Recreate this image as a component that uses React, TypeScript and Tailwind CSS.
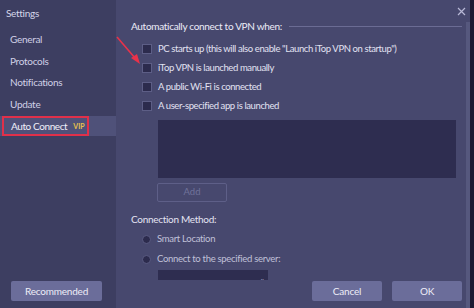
import React from "react";

function Check({ label }: { label: string }) {
  return (
    <div className="flex items-center gap-[6px] h-[19px]">
      <div className="w-[10px] h-[10px] bg-[#2c2b4d] border border-[#5d5e86]" />
      <span className="text-[9.5px] tracking-[-0.4px] text-[#e2e2f2] leading-none whitespace-nowrap">{label}</span>
    </div>
  );
}

function Radio({ label }: { label: string }) {
  return (
    <div className="flex items-center gap-[6px] h-[20px]">
      <div className="w-[9px] h-[9px] rounded-full bg-[#2c2b4d] border border-[#5a5b82]" />
      <span className="text-[9.5px] tracking-[-0.3px] text-[#c0c0d8] leading-none whitespace-nowrap">{label}</span>
    </div>
  );
}

export default function App() {
  return (
    <div
      className="relative w-[474px] h-[308px] flex overflow-hidden bg-[#47486e]"
      style={{ fontFamily: 'Lato, "Open Sans", sans-serif' }}
    >
      {/* Sidebar */}
      <div className="w-[116px] h-full bg-[#3d3e61] flex flex-col">
        <div className="pl-[6px] pt-[6px] h-[24px] text-[10px] tracking-[-0.3px] text-[#d6d6ea]">Settings</div>
        <div className="flex flex-col mt-[5px]">
          {["General", "Protocols", "Notifications", "Update"].map((t) => (
            <div key={t} className="h-[21.5px] pl-[10px] flex items-center text-[10px] tracking-[-0.3px] text-[#d0d0e6]">
              {t}
            </div>
          ))}
          <div className="h-[20px] mt-[1px] bg-[#4f5179] flex items-center">
            <div className="ml-[2px] w-[87px] h-[20px] border-2 border-[#e0304a] flex items-center pl-[7px] gap-[6px] whitespace-nowrap">
              <span className="text-[10px] tracking-[-0.4px] text-[#f0f0fa]">Auto Connect</span>
              <span className="text-[7px] font-bold text-[#e8c24a]">VIP</span>
            </div>
          </div>
        </div>
        <div className="flex-1" />
        <div className="pl-[11px] pb-[7px]">
          <div className="w-[91px] h-[20px] bg-[#6b6d9a] rounded-[2px] flex items-center justify-center text-[10px] tracking-[-0.2px] text-[#eeeef8]">
            Recommended
          </div>
        </div>
      </div>

      {/* Main */}
      <div className="flex-1 h-full flex">
        <div className="flex-1 flex flex-col pl-[15px] pt-[18px] pr-[4px]">
          <div className="flex items-center gap-[7px] h-[16px]">
            <span className="text-[10px] tracking-[-0.3px] text-[#ececf8] whitespace-nowrap">Automatically connect to VPN when:</span>
            <div className="flex-1 h-px bg-[#6b6c94]" />
          </div>
          <div className="flex flex-col pl-[11px] mt-[5px]">
            <Check label={'PC starts up (this will also enable "Launch iTop VPN on startup")'} />
            <Check label="iTop VPN is launched manually" />
            <Check label="A public Wi-Fi is connected" />
            <Check label="A user-specified app is launched" />
          </div>
          <div className="ml-[27px] mt-[5px] w-[298px] h-[58px] bg-[#2e2d50]" />
          <div className="ml-[26px] mt-[5px] w-[70px] h-[19px] border border-[#5e5f88] rounded-[2px] flex items-center justify-center text-[9.5px] text-[#70729a]">
            Add
          </div>
          <div className="mt-[10px] text-[10px] tracking-[-0.3px] text-[#e4e4f2] h-[16px]">Connection Method:</div>
          <div className="flex flex-col pl-[11px] mt-[1px]">
            <Radio label="Smart Location" />
            <Radio label="Connect to the specified server:" />
          </div>
          <div className="ml-[27px] mt-[1px] w-[110px] h-[10px] bg-[#2e2d50] flex items-end justify-end pr-[4px]">
            <span className="text-[7px] leading-[6px] text-[#a0a0c0]">..</span>
          </div>
          <div className="flex-1" />
          <div className="flex justify-end gap-[10px] pb-[7px]">
            <div className="w-[70px] h-[20px] bg-[#6b6d9a] rounded-[2px] flex items-center justify-center text-[10px] tracking-[-0.2px] text-[#eeeef8]">
              Cancel
            </div>
            <div className="w-[70px] h-[20px] bg-[#6b6d9a] rounded-[2px] flex items-center justify-center text-[10px] tracking-[-0.2px] text-[#eeeef8]">
              OK
            </div>
          </div>
        </div>
        {/* scrollbar */}
        <div className="w-[8px] h-full flex">
          <div className="w-[4px] h-full pt-[22px]">
            <div className="w-full h-full bg-[#56587e]" />
          </div>
          <div className="w-[4px] h-full bg-[#1c1b33]" />
        </div>
      </div>

      {/* Close X */}
      <svg className="absolute left-[457px] top-[7px]" width="9" height="9" viewBox="0 0 9 9">
        <path d="M1 1 L8 8 M8 1 L1 8" stroke="#b8b8d6" strokeWidth="1.2" />
      </svg>

      {/* red annotation arrow */}
      <svg className="absolute left-0 top-0 pointer-events-none" width="474" height="308">
        <line x1="117" y1="37" x2="135" y2="58" stroke="#e8324a" strokeWidth="1.6" />
        <polygon points="140,64 131,58 137,54" fill="#e8324a" />
      </svg>
    </div>
  );
}
